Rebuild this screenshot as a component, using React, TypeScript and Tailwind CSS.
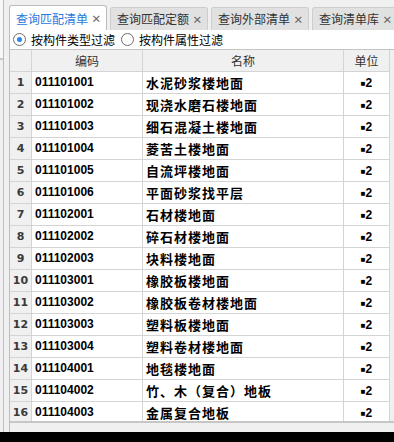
import React from "react";

const rows: [string, string][] = [
  ["011101001", "水泥砂浆楼地面"],
  ["011101002", "现浇水磨石楼地面"],
  ["011101003", "细石混凝土楼地面"],
  ["011101004", "菱苦土楼地面"],
  ["011101005", "自流坪楼地面"],
  ["011101006", "平面砂浆找平层"],
  ["011102001", "石材楼地面"],
  ["011102002", "碎石材楼地面"],
  ["011102003", "块料楼地面"],
  ["011103001", "橡胶板楼地面"],
  ["011103002", "橡胶板卷材楼地面"],
  ["011103003", "塑料板楼地面"],
  ["011103004", "塑料卷材楼地面"],
  ["011104001", "地毯楼地面"],
  ["011104002", "竹、木（复合）地板"],
  ["011104003", "金属复合地板"],
];

const cjk = { fontFamily: '"Noto Sans CJK SC", "Noto Sans", sans-serif' };

function Tab({ label, active }: { label: string; active?: boolean }) {
  if (active) {
    return (
      <div className="w-[98px] shrink-0 h-[26px] flex items-center pl-[6px] bg-white border border-b-0 border-[#bcbcbc] rounded-t-[3px] relative top-[1px]">
        <span className="text-[12px] text-[#2a78dc] leading-none whitespace-nowrap" style={cjk}>
          {label}
        </span>
        <span className="ml-[4px] text-[15px] text-[#666] leading-none">×</span>
      </div>
    );
  }
  return (
    <div className="w-[98px] shrink-0 h-[23px] flex items-center pl-[6px] bg-[#e1e1e1] border border-b-0 border-[#cdcdcd] rounded-t-[3px] overflow-hidden whitespace-nowrap">
      <span className="text-[12px] text-[#333] leading-none" style={cjk}>
        {label}
      </span>
      <span className="ml-[4px] text-[15px] text-[#666] leading-none">×</span>
    </div>
  );
}

function Radio({ checked, label }: { checked?: boolean; label: string }) {
  return (
    <div className="flex items-center gap-[5px]">
      <div className="w-[13px] h-[13px] rounded-full border border-[#6e6e6e] bg-white flex items-center justify-center">
        {checked && <div className="w-[5px] h-[5px] rounded-full bg-[#2a86f0]" />}
      </div>
      <span className="text-[12px] text-black leading-none" style={cjk}>
        {label}
      </span>
    </div>
  );
}

export default function App() {
  return (
    <div className="w-[394px] h-[442px] bg-[#f0f0f0] flex flex-col overflow-hidden">
      <div className="flex flex-1 min-h-0">
        {/* left splitter strip */}
        <div className="w-[9px] flex shrink-0">
          <div className="w-[3px] flex flex-col">
            <div className="h-[58px] bg-[#f7f7f7]" />
            <div className="h-[2px] bg-[#c9c9c9]" />
            <div className="flex-1" />
          </div>
          <div className="w-px bg-[#bdbdbd]" />
          <div className="flex-1" />
        </div>
        {/* main content */}
        <div className="flex-1 flex flex-col min-w-0">
          <div className="h-[30px] flex items-end gap-[3px] shrink-0 overflow-hidden">
            <Tab label="查询匹配清单" active />
            <Tab label="查询匹配定额" />
            <Tab label="查询外部清单" />
            <Tab label="查询清单库" />
          </div>
          <div className="flex-1 flex flex-col border-l border-[#bcbcbc] bg-white min-h-0">
            <div className="h-[19px] flex items-center gap-[6px] pl-[3px] shrink-0">
              <Radio checked label="按构件类型过滤" />
              <Radio label="按构件属性过滤" />
            </div>
            <div className="h-px bg-[#c4c4c4] shrink-0" />
            <div className="h-[371px] overflow-hidden bg-[#f0f0f0] shrink-0">
              <div className="w-[380px] flex flex-col">
                <div className="flex h-[22px] bg-[#f0f0f0]">
                  <div className="w-[22px] border-r border-b border-[#d4d4d4]" />
                  {[
                    ["编码", "w-[111px]"],
                    ["名称", "w-[201px]"],
                    ["单位", "w-[46px]"],
                  ].map(([t, w]) => (
                    <div
                      key={t}
                      className={`${w} border-r border-b border-[#d4d4d4] flex items-center justify-center text-[12px] text-[#333]`}
                      style={cjk}
                    >
                      {t}
                    </div>
                  ))}
                </div>
                {rows.map(([code, name], i) => (
                  <div key={code} className="flex h-[22px]">
                    <div
                      className="w-[22px] bg-[#f0f0f0] border-r border-b border-[#d4d4d4] flex items-center justify-center pt-[2px] text-[11px] font-bold text-[#3a3a3a]"
                      style={{ fontFamily: '"DejaVu Sans", sans-serif' }}
                    >
                      {i + 1}
                    </div>
                    <div
                      className="w-[111px] bg-white border-r border-b border-[#d4d4d4] flex items-center pl-[3px] pb-[2px] text-[12px] font-bold text-black"
                      style={{ fontFamily: '"Liberation Sans", sans-serif' }}
                    >
                      {code}
                    </div>
                    <div
                      className="w-[201px] bg-white border-r border-b border-[#d4d4d4] flex items-center pl-[3px] text-[13px] font-bold text-black tracking-[1px] whitespace-nowrap"
                      style={cjk}
                    >
                      {name}
                    </div>
                    <div
                      className="w-[46px] bg-white border-r border-b border-[#d4d4d4] flex items-center justify-center text-[12px] font-bold text-black"
                      style={{ fontFamily: '"Liberation Sans", sans-serif' }}
                    >
                      <span className="text-[8px] relative top-[1px]">■</span>2
                    </div>
                  </div>
                ))}
              </div>
            </div>
            <div className="h-[2px] bg-[#c6c6c6] shrink-0" />
            <div className="flex-1 bg-[#f0f0f0]" />
          </div>
        </div>
      </div>
      <div className="h-[10px] bg-black shrink-0" />
    </div>
  );
}
